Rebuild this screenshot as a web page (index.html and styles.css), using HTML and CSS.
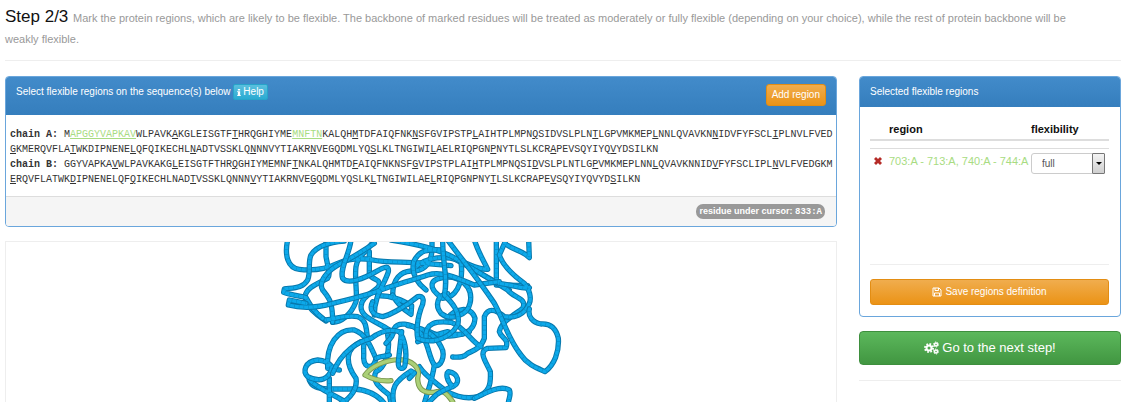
FILE: index.html
```html
<!DOCTYPE html>
<html lang="en">
<head>
<meta charset="utf-8">
<title>Step 2/3 - flexible regions</title>
<link rel="stylesheet" href="styles.css">
</head>
<body>
<header class="page-header">
  <h1 class="step">Step 2/3 <small>Mark the protein regions, which are likely to be flexible. The backbone of marked residues will be treated as moderately or fully flexible (depending on your choice), while the rest of protein backbone will be weakly flexible.</small></h1>
</header>
<div class="layout">
  <main class="main">
    <section class="panel">
      <div class="panel-heading heading-tools">
        <h2 class="panel-title">Select flexible regions on the sequence(s) below
          <button type="button" class="btn btn-info"><svg class="icon-info" viewBox="0 0 5 9" aria-hidden="true"><path d="M1 0h3v2H1zM0 3h4v5h1v1H0V8h1V4H0z"/></svg>Help</button>
        </h2>
        <button type="button" class="btn btn-warning btn-add">Add region</button>
      </div>
      <div class="sequences">
        <p class="chain"><b>chain A:</b> M<u class="marked">APGGYVAPKAV</u>WLPAVK<u>A</u>KGLEISGTF<u>T</u>HRQGHIYME<u class="marked">MNFTN</u>KALQH<u>M</u>TDFAIQFNK<u>N</u>SFGVIPSTP<u>L</u>AIHTPLMPN<u>Q</u>SIDVSLPLN<u>T</u>LGPVMKMEP<u>L</u>NNLQVAVKN<u>N</u>IDVFYFSCL<u>I</u>PLNVLFVED<u>G</u>KMERQVFLA<u>T</u>WKDIPNENE<u>L</u>QFQIKECHL<u>N</u>ADTVSSKLQ<u>N</u>NNVYTIAKR<u>N</u>VEGQDMLYQ<u>S</u>LKLTNGIWI<u>L</u>AELRIQPGN<u>P</u>NYTLSLKCR<u>A</u>PEVSQYIYQ<u>V</u>YDSILKN</p>
        <p class="chain"><b>chain B:</b> GGYVAPKA<u>V</u>WLPAVKAKG<u>L</u>EISGTFTHR<u>Q</u>GHIYMEMNF<u>T</u>NKALQHMTD<u>F</u>AIQFNKNSF<u>G</u>VIPSTPLAI<u>H</u>TPLMPNQSI<u>D</u>VSLPLNTLG<u>P</u>VMKMEPLNN<u>L</u>QVAVKNNID<u>V</u>FYFSCLIPL<u>N</u>VLFVEDGKM<u>E</u>RQVFLATWK<u>D</u>IPNENELQF<u>Q</u>IKECHLNAD<u>T</u>VSSKLQNNN<u>V</u>YTIAKRNVE<u>G</u>QDMLYQSLK<u>L</u>TNGIWILAE<u>L</u>RIQPGNPNY<u>T</u>LSLKCRAPE<u>V</u>SQYIYQVYD<u>S</u>ILKN</p>
      </div>
      <div class="panel-footer"><span class="badge">residue under cursor: <span class="residue">833:A</span></span></div>
    </section>
    <section class="viewer">
      <svg class="protein" viewBox="0 21 960 480" role="img" aria-label="Protein backbone">
        <defs>
          <g id="layer-a">
            <path d="M80 15C70 60 80 100 115 103C160 108 200 100 230 85C265 70 300 68 335 75C370 83 430 80 480 84L570 92"/>
            <path d="M195 15L195 65C200 95 210 120 200 130C160 150 135 160 132 185C135 210 150 225 170 240L195 258"/>
            <path d="M340 15C320 50 290 60 285 95C280 130 290 180 285 200C270 240 240 262 215 262"/>
            <path d="M325 50L325 120C345 140 355 130 355 150C350 170 300 180 300 215C300 250 350 260 385 285"/>
            <path d="M395 180C395 130 420 110 450 108C480 110 510 95 513 45L513 15"/>
            <path d="M560 250C580 220 630 210 642 250C640 290 600 310 560 290C520 300 500 310 470 320"/>
            <path d="M640 15C655 60 670 80 680 103C650 105 620 85 590 75C560 65 500 60 460 100"/>
            <path d="M706 15L706 150L800 152"/>
            <path d="M145 432C150 460 180 460 205 462L280 462C320 465 350 480 370 505"/>
            <path d="M380 300C390 350 370 400 345 410C330 440 360 460 385 480L390 505"/>
            <path d="M560 60C620 95 680 125 745 165"/>
            <path d="M505 290C540 310 590 305 625 290"/>
          </g>
          <g id="layer-b">
            <path d="M250 18C200 22 165 35 150 60C140 80 150 110 140 135C125 160 100 158 70 162L68 172C90 180 120 184 135 188C150 215 160 230 185 250"/>
            <path d="M340 25C310 45 270 70 240 85C200 105 170 140 185 165C205 190 215 200 215 262"/>
            <path d="M195 255C230 250 260 238 290 245C320 255 315 290 320 310"/>
            <path d="M395 180C410 210 430 225 450 238L452 212C430 200 400 182 350 182"/>
            <path d="M390 15C450 25 540 40 600 80C650 110 700 140 740 165C760 190 800 190 785 220C760 240 720 260 715 290C720 310 745 310 735 338L680 340C650 350 675 380 688 410C690 450 685 470 650 485C610 495 570 480 545 460C520 440 490 420 475 395"/>
            <path d="M495 165C470 145 450 115 458 80C475 45 500 42 545 45"/>
            <path d="M600 80C610 150 580 190 545 190C500 160 500 130 560 126C590 125 640 150 627 205C620 240 570 260 540 235C520 210 530 180 560 176"/>
            <path d="M520 390C500 360 505 320 470 285C450 265 410 260 400 280C398 300 390 310 375 325"/>
            <path d="M240 505C270 490 290 460 285 430C270 410 260 390 262 365C265 340 280 330 300 320"/>
            <path d="M490 505C500 470 515 430 520 390C540 400 555 360 540 335C520 290 470 275 440 272"/>
            <path d="M205 430L205 505"/>
            <path d="M145 435C170 460 220 480 255 502"/>
          </g>
          <g id="layer-c">
            <path d="M135 205L85 195L82 210C130 222 180 215 215 205C260 195 300 185 340 172C380 155 440 140 500 120C540 108 580 125 640 150L715 140"/>
            <path d="M270 15C265 60 235 100 245 130C260 150 310 130 345 110C370 95 385 90 382 110C370 150 340 180 340 240"/>
            <path d="M495 310C490 260 530 258 570 262C610 275 630 320 660 335"/>
            <path d="M200 400C195 330 230 280 280 285C320 300 330 340 345 370C340 400 310 405 308 370C310 330 300 330 325 310"/>
            <path d="M235 405C205 405 220 380 170 375C130 380 125 410 140 425C180 445 205 430 212 400"/>
            <path d="M735 15L715 60C725 90 755 120 790 145C805 160 812 190 805 205C790 240 760 250 730 245C700 220 680 220 670 245L670 310C660 340 640 345 620 355C610 365 600 368 575 366"/>
            <path d="M735 28C760 45 790 50 805 68L803 15"/>
            <path d="M715 145C760 150 790 165 805 158"/>
            <path d="M640 490C680 470 720 450 745 465C752 480 742 490 742 505"/>
          </g>
          <g id="layer-d">
            <path d="M335 200C325 220 330 240 365 245C390 240 440 210 470 185C490 180 490 200 480 220C470 250 465 280 470 310C500 325 560 320 590 270C600 230 570 200 550 180C562 130 545 90 545 15"/>
            <path d="M560 15C600 70 650 130 700 205C730 260 740 310 780 360C800 390 830 400 852 410C880 390 895 350 892 310C885 280 870 265 840 267C815 262 800 245 805 222"/>
            <path d="M215 415C240 350 290 320 330 310C370 280 400 285 415 290C430 310 440 350 432 390C430 405 410 405 412 380L422 290"/>
            <path d="M345 370C360 362 375 365 385 360"/>
            <path d="M398 505C390 460 400 440 450 408L460 414L445 430"/>
            <path d="M575 455C555 435 555 415 562 410C595 415 595 445 580 452C560 460 540 468 525 480L500 505"/>
          </g>
          <g id="loop">
            <path d="M390 437C360 440 330 430 312 420C330 395 370 375 415 374C450 375 480 395 470 430C470 460 485 475 520 472C550 462 560 480 575 500"/>
          </g>
        </defs>
        <use href="#layer-a" class="edge"/><use href="#layer-a" class="core"/><use href="#layer-a" class="bands"/>
        <use href="#layer-b" class="edge"/><use href="#layer-b" class="core"/><use href="#layer-b" class="bands"/>
        <use href="#layer-c" class="edge"/><use href="#layer-c" class="core"/><use href="#layer-c" class="bands"/>
        <use href="#loop" class="edge edge-marked"/><use href="#loop" class="core core-marked"/>
        <use href="#layer-d" class="edge"/><use href="#layer-d" class="core"/><use href="#layer-d" class="bands"/>
      </svg>
    </section>
  </main>
  <aside class="side">
    <section class="panel">
      <div class="panel-heading"><h2 class="panel-title">Selected flexible regions</h2></div>
      <div class="panel-body">
        <div class="regions">
          <table class="region-table">
            <thead><tr><th class="col-remove"></th><th>region</th><th class="col-flex"><label for="flex">flexibility</label></th></tr></thead>
            <tbody>
              <tr class="spacer"><td colspan="3"></td></tr>
              <tr>
                <td class="col-remove"><button type="button" class="remove" aria-label="Remove region"><svg viewBox="0 0 8 8" class="icon-remove" aria-hidden="true"><path d="M2 0L4 2L6 0L8 2L6 4L8 6L6 8L4 6L2 8L0 6L2 4L0 2Z"/></svg></button></td>
                <td class="range">703:A - 713:A, 740:A - 744:A</td>
                <td class="col-flex"><span class="select-box"><select id="flex" class="select"><option>full</option><option>moderate</option></select><span class="select-arrow"></span></span></td>
              </tr>
            </tbody>
          </table>
        </div>
        <button type="button" class="btn btn-warning btn-save"><svg class="icon-save" viewBox="0 0 20 20" aria-hidden="true"><path d="M2 2H14L18 6V18H2ZM6 2V7H13V2M5 18V12H15V18" fill="none" stroke="currentColor" stroke-width="2"/></svg>Save regions definition</button>
      </div>
    </section>
    <button type="button" class="btn btn-success"><svg class="icon-cogs" viewBox="0 0 30 28" aria-hidden="true"><g fill="none" stroke="currentColor"><circle cx="10" cy="14" r="5" stroke-width="4"/><circle cx="10" cy="14" r="8" stroke-width="4" stroke-dasharray="3.3 2.98"/><circle cx="24" cy="7" r="3" stroke-width="3"/><circle cx="24" cy="7" r="5" stroke-width="2" stroke-dasharray="2.6 2.6"/><circle cx="24" cy="21" r="3" stroke-width="3"/><circle cx="24" cy="21" r="5" stroke-width="2" stroke-dasharray="2.6 2.6"/></g></svg>Go to the next step!</button>
    <hr class="divider">
  </aside>
</div>
</body>
</html>
```
FILE: styles.css
```css
* { box-sizing: border-box; }
body {
  margin: 0;
  padding: 6px 9px 0 5px;
  background: #fff;
  color: #333;
  font-family: "Liberation Sans", Arial, sans-serif;
  font-size: 11px;
  line-height: 16px;
}
.page-header { padding: 0 20px 12px 0; margin-bottom: 15px; border-bottom: 1px solid #eee; }
.step { margin: 0; color: #111; font-size: 17px; font-weight: 400; line-height: 21px; }
.step small { color: #999; font-size: 11px; line-height: 13px; }
.layout { display: grid; grid-template-columns: minmax(0, 1fr) 262px; gap: 22px; align-items: start; }
.panel { margin-bottom: 14px; border: 1px solid #6aa6dc; border-radius: 4px; background: #fff; overflow: hidden; }
.panel-heading { padding: 7px 10px; color: #fff; background: linear-gradient(#428bca, #357ebd); }
.heading-tools { display: flex; justify-content: space-between; align-items: flex-start; }
.heading-tools .btn-add { margin-bottom: 2px; }
.panel-title { margin: 0; font-size: 10px; font-weight: 400; line-height: 16px; }
.btn {
  display: inline-flex;
  align-items: center;
  justify-content: center;
  border: 1px solid;
  border-radius: 3px;
  color: #fff;
  font-family: inherit;
  font-size: 10px;
  line-height: 14px;
}
.btn-info { height: 16px; padding: 0 3px; border-color: #28a4c9; border-radius: 2px; background: linear-gradient(#5bc0de, #2aabd2); vertical-align: top; }
.btn-warning { border-color: #e38d13; background: linear-gradient(#f0ad4e, #eb9316); }
.btn-add { padding: 3px 5px; }
.btn-save { width: 100%; padding: 5px; }
.btn-success { width: 100%; padding: 8px; border-color: #3e8f3e; background: linear-gradient(#5cb85c, #419641); font-size: 13px; line-height: 16px; border-radius: 4px; }
.icon-info { width: 4px; height: 7px; margin-right: 2px; fill: currentColor; }
.icon-save { width: 10px; height: 10px; margin-right: 3px; }
.icon-cogs { width: 15px; height: 14px; margin-right: 3px; }
.icon-remove { display: block; width: 8px; height: 8px; fill: #b52b27; }
.sequences { padding: 12px 3px 9px 4px; font-family: "Liberation Mono", "Courier New", monospace; font-size: 10px; line-height: 15px; }
.chain { margin: 0; word-break: break-all; }
.marked { color: #a8dc82; }
.panel-footer { display: flex; justify-content: flex-end; padding: 7px 11px; border-top: 1px solid #ddd; background: #f5f5f5; }
.badge { padding: 0 3px; border-radius: 7px; color: #fff; background: #999; font-size: 9px; font-weight: 700; line-height: 14px; }
.residue { font-family: "Liberation Mono", "Courier New", monospace; }
.viewer { display: flex; justify-content: center; border: 1px solid #eee; border-bottom: 0; overflow: hidden; }
.protein { display: block; width: 320px; height: 160px; fill: none; stroke-linejoin: round; stroke-linecap: round; }
.edge { stroke: #0878ac; stroke-width: 16; }
.core { stroke: #0da9ea; stroke-width: 10; }
.bands { stroke: #0a90c8; stroke-width: 10; stroke-linecap: butt; stroke-dasharray: 2 12; }
.edge-marked { stroke: #7c9950; }
.core-marked { stroke: #abd077; }
.panel-body { padding: 11px 11px 11px 10px; }
.regions { min-height: 147px; margin-bottom: 14px; border-bottom: 1px solid #eee; }
.region-table { width: 100%; border-collapse: collapse; }
.region-table th { padding: 3px 0 2px; border-bottom: 2px solid #ddd; color: #111; font-weight: 700; text-align: left; }
.region-table td { padding: 4px 0; border-top: 1px solid #ddd; vertical-align: top; }
.region-table .spacer td { height: 8px; padding: 0; }
.region-table .col-remove { width: 19px; }
.region-table .col-flex { width: 78px; }
.region-table .range { color: #a8dc82; white-space: nowrap; }
.remove { display: block; padding: 4px; border: 0; background: none; }
.select-box { position: relative; display: block; width: 74px; }
.select { display: block; width: 100%; height: 21px; padding: 0 10px; border: 1px solid #ccc; border-radius: 3px; appearance: none; background: #fff; color: #555; font-family: inherit; font-size: 10px; }
.select-arrow { position: absolute; top: 0; right: 0; bottom: 0; display: flex; align-items: center; justify-content: center; width: 13px; border: 1px solid #777; border-radius: 1px; background: linear-gradient(#f4f4f4, #cfcfcf); pointer-events: none; }
.select-arrow::after { content: ""; border: 3px solid transparent; border-top-color: #000; border-bottom: 0; }
.divider { height: 1px; margin: 15px 0 0; border: 0; background: #eee; }
```
